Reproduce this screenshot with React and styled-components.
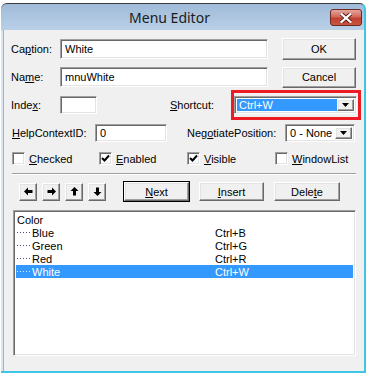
import React from 'react';
import styled, { createGlobalStyle, css } from 'styled-components';

const GlobalStyle = createGlobalStyle`
  html, body { margin: 0; padding: 0; background: #fff; }
  body {
    width: 371px;
    height: 375px;
    overflow: hidden;
    font-family: "Liberation Sans", Arial, sans-serif;
    font-size: 11px;
    color: #000;
  }
  u { text-decoration: underline; text-underline-offset: 1px; }
`;

const raised = css`
  border: 1px solid;
  border-color: #fff #696969 #696969 #fff;
  box-shadow: inset -1px -1px #a0a0a0, inset 1px 1px #e3e3e3;
  background: #f0f0f0;
`;

const sunken = css`
  border: 1px solid;
  border-color: #a0a0a0 #fff #fff #a0a0a0;
  box-shadow: inset 1px 1px #696969, inset -1px -1px #e3e3e3;
  background: #fff;
`;

const Frame = styled.div`
  margin: 3px 0 0 1px;
  width: 365px;
  height: 370px;
  box-sizing: border-box;
  display: flex;
  flex-direction: column;
  border-top: 1px solid #3a3a3a;
  border-right: 2px solid #3fc6e6;
  border-bottom: 2px solid #3fc6e6;
  border-radius: 6px 6px 0 0;
  padding-left: 2px;
  background: linear-gradient(#9fbbd8, #bad0e7 26px, #d9e5f1 27px, #d9e5f1);
`;

const TitleBar = styled.div`
  height: 26px;
  display: flex;
  align-items: center;
`;

const Title = styled.div`
  flex: 1;
  text-align: center;
  padding-left: 6px;
  font-family: "Noto Sans", sans-serif;
  font-size: 14px;
  color: #1b1b1b;
`;

const CloseButton = styled.div`
  width: 32px;
  height: 17px;
  box-sizing: border-box;
  margin-right: 2px;
  margin-top: 1px;
  border: 1px solid #6c2a22;
  border-radius: 3px;
  background: linear-gradient(#e3a69c, #d2685b 45%, #c04132 55%, #c8553f);
  display: flex;
  align-items: center;
  justify-content: center;
`;

const Content = styled.div`
  height: 341px;
  border-left: 1px solid #9db3ca;
  background: #f0f0f0;
  display: flex;
  flex-direction: column;
  position: relative;
`;

const Row = styled.div`
  display: flex;
  align-items: center;
  height: ${(p) => p.h}px;
  margin-top: ${(p) => p.mt}px;
  padding-left: ${(p) => p.pl ?? 7}px;
`;

const Label = styled.span`
  width: ${(p) => p.w}px;
  margin-left: ${(p) => p.ml || 0}px;
  white-space: nowrap;
  flex-shrink: 0;
`;

const TextBox = styled.div`
  ${sunken}
  box-sizing: border-box;
  width: ${(p) => p.w}px;
  height: ${(p) => p.h}px;
  padding-left: 4px;
  display: flex;
  align-items: center;
  flex-shrink: 0;
`;

const Button = styled.div`
  ${raised}
  box-sizing: border-box;
  width: ${(p) => p.w}px;
  height: ${(p) => p.h}px;
  margin-left: ${(p) => p.ml || 0}px;
  display: flex;
  align-items: center;
  justify-content: center;
  flex-shrink: 0;
  ${(p) =>
    p.$default &&
    css`
      outline: 1px solid #000;
      outline-offset: 0;
    `}
`;

const Combo = styled.div`
  ${sunken}
  box-sizing: border-box;
  width: ${(p) => p.w}px;
  height: ${(p) => p.h}px;
  padding: 2px;
  display: flex;
  flex-shrink: 0;
`;

const ComboValue = styled.div`
  flex: 1;
  display: flex;
  align-items: center;
  padding-left: 2px;
  background: ${(p) => (p.$selected ? '#3399ff' : 'transparent')};
  color: ${(p) => (p.$selected ? '#fff' : '#000')};
`;

const ComboArrow = styled.div`
  ${raised}
  box-sizing: border-box;
  width: 17px;
  display: flex;
  align-items: center;
  justify-content: center;
`;

const Highlight = styled.div`
  border: 3px solid #ed1c24;
  padding: 3px 1px 3px 0;
`;

const CheckRow = styled.div`
  display: grid;
  grid-template-columns: 87px 88px 88px 1fr;
  height: 13px;
  margin-top: 10px;
  padding-left: 8px;
`;

const CheckItem = styled.div`
  display: flex;
  align-items: center;
  gap: 4px;
`;

const Box = styled.div`
  ${sunken}
  box-sizing: border-box;
  width: 13px;
  height: 13px;
  display: flex;
  align-items: center;
  justify-content: center;
`;

const Separator = styled.div`
  margin: 8px 8px 0 8px;
  height: 1px;
  background: #a0a0a0;
  border-bottom: 1px solid #fff;
`;

const ToolRow = styled.div`
  display: flex;
  align-items: center;
  margin-top: 7px;
  padding-left: 15px;
  height: 19px;
`;

const ArrowGroup = styled.div`
  display: flex;
  gap: 5px;
  width: 105px;
`;

const ListBox = styled.div`
  ${sunken}
  box-sizing: border-box;
  margin: 9px 0 0 9px;
  width: 343px;
  height: 146px;
  padding: 2px;
`;

const ListRow = styled.div`
  height: 13px;
  display: flex;
  align-items: center;
  padding-left: 1px;
  background: ${(p) => (p.$selected ? '#3399ff' : 'transparent')};
  color: ${(p) => (p.$selected ? '#fff' : '#000')};
`;

const ItemName = styled.span`
  width: 198px;
  display: flex;
  align-items: center;
`;

const Dots = styled.span`
  display: inline-block;
  width: 14px;
  height: 1px;
  margin-right: 1px;
  background: repeating-linear-gradient(
    90deg,
    ${(p) => (p.$light ? '#dfeeff' : '#4a4a7a')} 0 1px,
    transparent 1px 3px
  );
`;

const DropTriangle = () => (
  <svg width="7" height="4" viewBox="0 0 7 4">
    <path d="M0 0H7L3.5 4Z" fill="#000" />
  </svg>
);

const Check = () => (
  <svg width="9" height="9" viewBox="0 0 9 9">
    <path d="M1 4L3.5 6.5L8 1.5" stroke="#000" strokeWidth="2" fill="none" />
  </svg>
);

const arrows = {
  left: 'M0 4.5L4 0.5V3H8.5V6H4V8.5Z',
  right: 'M9 4.5L5 0.5V3H0.5V6H5V8.5Z',
  up: 'M4.5 0L8.5 4H6V8.5H3V4H0.5Z',
  down: 'M4.5 9L8.5 5H6V0.5H3V5H0.5Z',
};

const Arrow = ({ dir }) => (
  <svg width="9" height="9" viewBox="0 0 9 9">
    <path d={arrows[dir]} fill="#000" />
  </svg>
);

const CloseGlyph = () => (
  <svg width="12" height="10" viewBox="0 0 12 10">
    <path
      d="M1.5 1L10.5 9M10.5 1L1.5 9"
      stroke="#5a1a14"
      strokeWidth="4"
      strokeLinecap="square"
    />
    <path
      d="M1.5 1L10.5 9M10.5 1L1.5 9"
      stroke="#fff"
      strokeWidth="2.2"
      strokeLinecap="square"
    />
  </svg>
);

const items = [
  { name: 'Blue', key: 'Ctrl+B' },
  { name: 'Green', key: 'Ctrl+G' },
  { name: 'Red', key: 'Ctrl+R' },
  { name: 'White', key: 'Ctrl+W', selected: true },
];

const Checkbox = ({ checked, children }) => (
  <CheckItem>
    <Box>{checked && <Check />}</Box>
    <span>{children}</span>
  </CheckItem>
);

export default function App() {
  return (
    <>
      <GlobalStyle />
      <Frame>
        <TitleBar>
          <Title>Menu Editor</Title>
          <CloseButton>
            <CloseGlyph />
          </CloseButton>
        </TitleBar>
        <Content>
          <Row h={22} mt={8}>
            <Label w={49}>
              Ca<u>p</u>tion:
            </Label>
            <TextBox w={208} h={20}>White</TextBox>
            <Button w={74} h={22} ml={14}>OK</Button>
          </Row>
          <Row h={22} mt={6}>
            <Label w={49}>
              Na<u>m</u>e:
            </Label>
            <TextBox w={208} h={20}>mnuWhite</TextBox>
            <Button w={74} h={21} ml={14}>Cancel</Button>
          </Row>
          <Row h={29} mt={2}>
            <Label w={49}>
              Inde<u>x</u>:
            </Label>
            <TextBox w={37} h={18} />
            <Label w={61} ml={73}>
              <u>S</u>hortcut:
            </Label>
            <Highlight>
              <Combo w={123} h={18}>
                <ComboValue $selected>Ctrl+W</ComboValue>
                <ComboArrow>
                  <DropTriangle />
                </ComboArrow>
              </Combo>
            </Highlight>
          </Row>
          <Row h={19} mt={4} pl={8}>
            <Label w={83}>
              <u>H</u>elpContextID:
            </Label>
            <TextBox w={72} h={18}>0</TextBox>
            <Label w={98} ml={20}>
              Neg<u>o</u>tiatePosition:
            </Label>
            <Combo w={70} h={18}>
              <ComboValue>0 - None</ComboValue>
              <ComboArrow>
                <DropTriangle />
              </ComboArrow>
            </Combo>
          </Row>
          <CheckRow>
            <Checkbox>
              <u>C</u>hecked
            </Checkbox>
            <Checkbox checked>
              <u>E</u>nabled
            </Checkbox>
            <Checkbox checked>
              <u>V</u>isible
            </Checkbox>
            <Checkbox>
              <u>W</u>indowList
            </Checkbox>
          </CheckRow>
          <Separator />
          <ToolRow>
            <ArrowGroup>
              {['left', 'right', 'up', 'down'].map((d) => (
                <Button key={d} w={18} h={18}>
                  <Arrow dir={d} />
                </Button>
              ))}
            </ArrowGroup>
            <Button w={65} h={19} $default>
              <span>
                <u>N</u>ext
              </span>
            </Button>
            <Button w={65} h={19} ml={10}>
              <span>
                <u>I</u>nsert
              </span>
            </Button>
            <Button w={66} h={19} ml={10}>
              <span>
                Dele<u>t</u>e
              </span>
            </Button>
          </ToolRow>
          <ListBox>
            <ListRow>
              <ItemName>Color</ItemName>
            </ListRow>
            {items.map((it) => (
              <ListRow key={it.name} $selected={it.selected}>
                <ItemName>
                  <Dots $light={it.selected} />
                  {it.name}
                </ItemName>
                <span>{it.key}</span>
              </ListRow>
            ))}
          </ListBox>
        </Content>
      </Frame>
    </>
  );
}
